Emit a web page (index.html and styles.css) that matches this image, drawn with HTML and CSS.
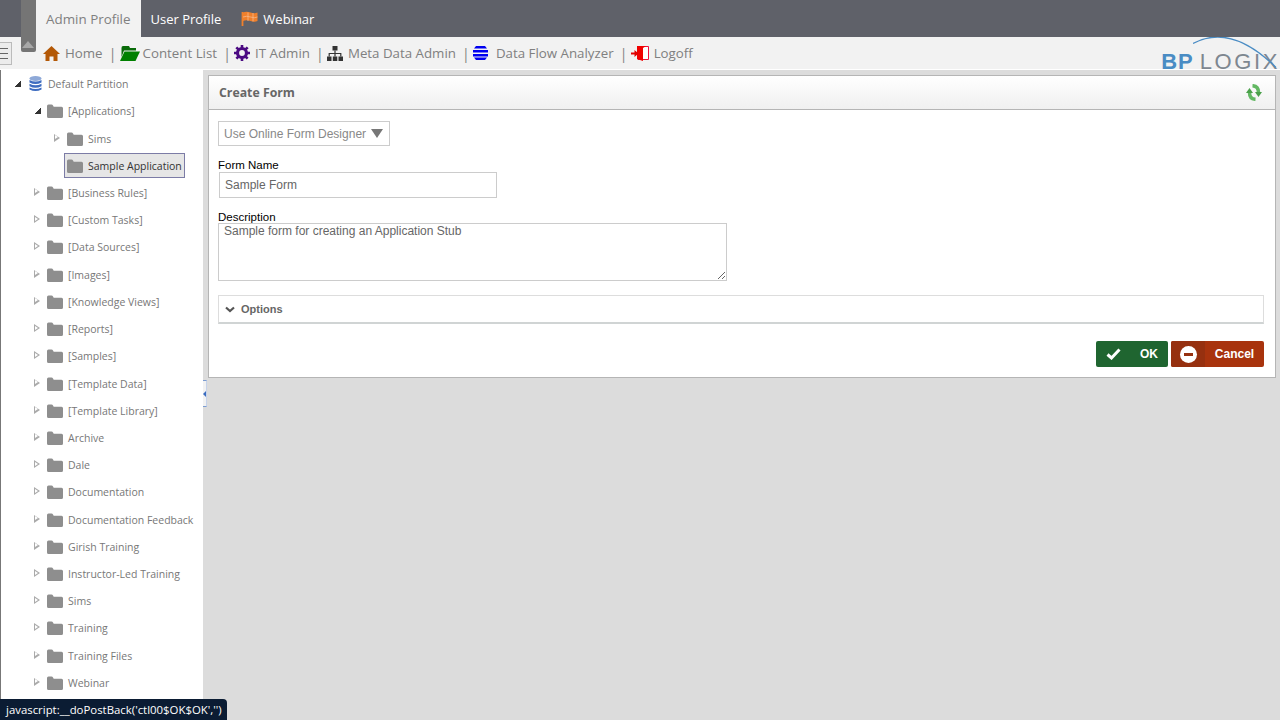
FILE: index.html
```html
<!DOCTYPE html>
<html lang="en">

<head>
    <meta charset="UTF-8">
    <title>Create Form</title>
    <link rel="stylesheet" href="styles.css">
</head>

<body>
    <svg class="defs" width="0" height="0">
        <symbol id="folder" viewBox="0 0 16 14">
            <path d="M0 2q0-1.500 1.500-1.500h3q1 0 1.500 1l.7 1.200h7.800q1.500 0 1.500 1.500v8.300q0 1.500-1.500 1.500h-13q-1.500 0-1.500-1.500z" />
        </symbol>
    </svg>

    <div class="top-bar">
        <a class="tab active">Admin Profile</a>
        <a class="tab">User Profile</a>
        <a class="tab">
            <svg class="flag" viewBox="0 0 17 15" width="17" height="15">
                <path d="M1.500 1v14" stroke="#f0802c" stroke-width="1.800" />
                <path d="M2 1.500q3.500-1.500 7.500 0t7 0v8.500q-3 1.500-7 0t-7.500 0z" fill="#f0802c" />
                <path d="M7 1.500v8.500M12 2v8.500M2 6q3.500-1.500 7.500 0t7 0" stroke="#f8b98a" stroke-width=".8" fill="none" />
            </svg>
            Webinar
        </a>
    </div>
    <div class="handle"><span class="handle-arrow"></span></div>

    <div class="nav-bar">
        <div class="burger"><span></span><span></span><span></span></div>
        <a class="nav-item">
            <svg viewBox="0 0 17 15" width="17" height="15">
                <path d="M8.500 0L17 8h-2.500v7h-4v-4.500h-4V15h-4V8H0z" fill="#b35806" />
            </svg>
            Home
        </a>
        <i class="sep">|</i>
        <a class="nav-item tight">
            <svg viewBox="0 0 20 15" width="20" height="15">
                <path d="M3 0h6l1 2h6v2.500H4L1.500 11V2q0-2 1.500-2z" fill="#0a6b0a" />
                <path d="M4.500 5.500H20L15.500 15H0z" fill="#008000" />
            </svg>
            Content List
        </a>
        <i class="sep">|</i>
        <a class="nav-item">
            <svg viewBox="0 0 16 16" width="16" height="16">
                <circle cx="8" cy="8" r="4.500" fill="none" stroke="#4b0a82" stroke-width="3.200" />
                <path d="M8 0v16M0 8h16M2.300 2.300l11.400 11.400M13.700 2.300L2.300 13.700" stroke="#4b0a82" stroke-width="2.600" stroke-dasharray="3 10 3" />
            </svg>
            IT Admin
        </a>
        <i class="sep">|</i>
        <a class="nav-item">
            <svg viewBox="0 0 16 15" width="16" height="15">
                <path d="M5.500 0h5v4.500h-5zM0 10.500h4.500V15H0zM5.800 10.500h4.500V15H5.800zM11.500 10.500H16V15h-4.500z" fill="#333" />
                <path d="M8 4.500v6M2.200 10.500V7.500h11.600v3" fill="none" stroke="#333" stroke-width="1.200" />
            </svg>
            Meta Data Admin
        </a>
        <i class="sep">|</i>
        <a class="nav-item wide">
            <svg viewBox="0 0 15 14" width="15" height="14">
                <path d="M3 0h9l2 2.500H1zM0 4h15v2.500H0zM0 8h15v2.500H0zM1 11.500h13L12 14H3z" fill="#0000f0" />
            </svg>
            Data Flow Analyzer
        </a>
        <i class="sep">|</i>
        <a class="nav-item">
            <svg viewBox="0 0 18 15" width="18" height="15">
                <path d="M7 .5h10.500v13H7z" fill="#fff" stroke="#f0103c" />
                <path d="M6 0h9l-3 2v13l-6-2z" fill="#f00000" />
                <path d="M0 6.500h3.500V4L7.500 7.500 3.500 11V8.500H0z" fill="#e00000" />
            </svg>
            Logoff
        </a>
        <svg class="logo-arc" viewBox="0 0 87 32" width="87" height="32">
            <path d="M0 6.500Q38-14 83 30.500" fill="none" stroke="#4a8cc4" stroke-width="1.300" />
        </svg>
        <div class="logo"><b>BP</b><span>LOGIX</span></div>
    </div>

    <div class="main">
        <div class="tree">
            <div class="node">
                <i class="arrow open"></i>
                <svg class="db" viewBox="0 0 13 16" width="13" height="16">
                    <ellipse cx="6.500" cy="2.500" rx="6" ry="2.500" fill="#8ea9d8" />
                    <path d="M.5 4q6 3 12 0v2.500q-6 3-12 0zM.5 7.800q6 3 12 0v2.500q-6 3-12 0zM.5 11.500q6 3 12 0v2q-6 3-12 0z" fill="#3d6cc0" />
                </svg>
                <span>Default Partition</span>
            </div>
            <div class="node lvl1"><i class="arrow open"></i><svg class="fld"><use href="#folder" /></svg><span>[Applications]</span></div>
            <div class="node lvl2"><i class="arrow"></i><svg class="fld"><use href="#folder" /></svg><span>Sims</span></div>
            <div class="node lvl2"><i class="arrow none"></i><div class="selected"><svg class="fld"><use href="#folder" /></svg><span>Sample Application</span></div></div>
            <div class="node lvl1"><i class="arrow"></i><svg class="fld"><use href="#folder" /></svg><span>[Business Rules]</span></div>
            <div class="node lvl1"><i class="arrow"></i><svg class="fld"><use href="#folder" /></svg><span>[Custom Tasks]</span></div>
            <div class="node lvl1"><i class="arrow"></i><svg class="fld"><use href="#folder" /></svg><span>[Data Sources]</span></div>
            <div class="node lvl1"><i class="arrow"></i><svg class="fld"><use href="#folder" /></svg><span>[Images]</span></div>
            <div class="node lvl1"><i class="arrow"></i><svg class="fld"><use href="#folder" /></svg><span>[Knowledge Views]</span></div>
            <div class="node lvl1"><i class="arrow"></i><svg class="fld"><use href="#folder" /></svg><span>[Reports]</span></div>
            <div class="node lvl1"><i class="arrow"></i><svg class="fld"><use href="#folder" /></svg><span>[Samples]</span></div>
            <div class="node lvl1"><i class="arrow"></i><svg class="fld"><use href="#folder" /></svg><span>[Template Data]</span></div>
            <div class="node lvl1"><i class="arrow"></i><svg class="fld"><use href="#folder" /></svg><span>[Template Library]</span></div>
            <div class="node lvl1"><i class="arrow"></i><svg class="fld"><use href="#folder" /></svg><span>Archive</span></div>
            <div class="node lvl1"><i class="arrow"></i><svg class="fld"><use href="#folder" /></svg><span>Dale</span></div>
            <div class="node lvl1"><i class="arrow"></i><svg class="fld"><use href="#folder" /></svg><span>Documentation</span></div>
            <div class="node lvl1"><i class="arrow"></i><svg class="fld"><use href="#folder" /></svg><span>Documentation Feedback</span></div>
            <div class="node lvl1"><i class="arrow"></i><svg class="fld"><use href="#folder" /></svg><span>Girish Training</span></div>
            <div class="node lvl1"><i class="arrow"></i><svg class="fld"><use href="#folder" /></svg><span>Instructor-Led Training</span></div>
            <div class="node lvl1"><i class="arrow"></i><svg class="fld"><use href="#folder" /></svg><span>Sims</span></div>
            <div class="node lvl1"><i class="arrow"></i><svg class="fld"><use href="#folder" /></svg><span>Training</span></div>
            <div class="node lvl1"><i class="arrow"></i><svg class="fld"><use href="#folder" /></svg><span>Training Files</span></div>
            <div class="node lvl1"><i class="arrow"></i><svg class="fld"><use href="#folder" /></svg><span>Webinar</span></div>
        </div>

        <div class="content">
            <div class="splitter"><i></i></div>
            <div class="panel">
                <div class="panel-head">
                    <span>Create Form</span>
                    <svg viewBox="0 0 16 17" width="16" height="17">
                        <path d="M9.500 15.300Q3.500 15 3.500 8.500" fill="none" stroke="#62b862" stroke-width="3.500" />
                        <path d="M0 9l3.500-5L7 9z" fill="#4aa04a" />
                        <path d="M6.500 1.700Q12.500 2 12.500 8.500" fill="none" stroke="#62b862" stroke-width="3.500" />
                        <path d="M9 8l3.500 5L16 8z" fill="#4aa04a" />
                    </svg>
                </div>
                <div class="panel-body">
                    <div class="dropdown">Use Online Form Designer<i></i></div>
                    <label class="lbl">Form Name</label>
                    <input class="name-input" type="text" value="Sample Form">
                    <label class="lbl desc-lbl">Description</label>
                    <textarea class="desc">Sample form for creating an Application Stub</textarea>
                    <div class="options">
                        <svg viewBox="0 0 10 7" width="10" height="7">
                            <path d="M1 1.500l4 3.500 4-3.500" fill="none" stroke="#555" stroke-width="2.200" />
                        </svg>
                        Options
                    </div>
                    <div class="buttons">
                        <a class="btn ok">
                            <span class="btn-icon">
                                <svg viewBox="0 0 15 12" width="15" height="12">
                                    <path d="M1.500 6.500l4 3.500 8-8.500" fill="none" stroke="#fff" stroke-width="3" />
                                </svg>
                            </span>
                            <span class="btn-text">OK</span>
                        </a>
                        <a class="btn cancel">
                            <span class="btn-icon"><i class="minus"></i></span>
                            <span class="btn-text">Cancel</span>
                        </a>
                    </div>
                </div>
            </div>
        </div>
    </div>

    <div class="status-tip">javascript:__doPostBack('ctl00$OK$OK','')</div>
</body>

</html>
```

FILE: styles.css
```css
html,
body {
    margin: 0;
    height: 720px;
    overflow: hidden;
}

body {
    position: relative;
    font-family: "Open Sans", sans-serif;
    background: #dcdcdc;
}

.defs {
    position: absolute;
}

/* top tabs */
.top-bar {
    display: flex;
    height: 37px;
    padding-left: 35px;
    background: #5f6169;
}

.tab {
    display: flex;
    align-items: center;
    gap: 5px;
    padding: 0 10px;
    font-size: 13px;
    color: #fff;
}

.tab.active {
    background: #f2f2f2;
    color: #808080;
    padding: 0 10px 0 11px;
    font-size: 13.400px;
}

.handle {
    position: absolute;
    z-index: 2;
    left: 21px;
    top: 0;
    width: 15px;
    height: 52px;
    background: #757575;
    border-radius: 0 0 2px 2px;
}

.handle-arrow {
    position: absolute;
    left: 1px;
    bottom: 4px;
    border: 6.500px solid transparent;
    border-top: 0;
    border-bottom: 7px solid #a8a8a8;
}

/* second row */
.nav-bar {
    position: relative;
    display: flex;
    align-items: center;
    height: 32px;
    background: #f2f2f2;
    border-bottom: 1px solid #fff;
    font-size: 13.300px;
    color: #808080;
}

.burger {
    display: flex;
    flex-direction: column;
    justify-content: center;
    gap: 4px;
    box-sizing: border-box;
    width: 12px;
    height: 23px;
    margin-right: 31px;
    border: 1px solid #bbb;
    border-left: 0;
    background: #ececec;
}

.burger span {
    width: 8px;
    height: 1px;
    background: #666;
}

.nav-item {
    display: flex;
    align-items: center;
    gap: 5px;
}

.nav-item.tight {
    gap: 3px;
}

.nav-item.wide {
    gap: 8px;
}

.sep {
    display: flex;
    justify-content: center;
    width: 2px;
    margin: 0 6px 0 9px;
    font-style: normal;
    font-size: 14px;
}

.logo {
    display: flex;
    align-items: baseline;
    gap: 6px;
    margin: 18px 0 0 auto;
    font-size: 22px;
    line-height: 20px;
    font-family: "Liberation Sans", sans-serif;
    color: #7e8790;
}

.logo b {
    color: #4a8cc4;
    font-size: 22px;
    letter-spacing: 1px;
}

.logo span {
    letter-spacing: 2.600px;
}

.logo-arc {
    position: absolute;
    right: 0;
    top: 0;
}

/* main area */
.main {
    display: flex;
    height: 650px;
}

.tree {
    box-sizing: border-box;
    width: 203px;
    padding-top: .5px;
    background: #fff;
    border-left: 1px solid #777;
    font-size: 10.500px;
    color: #777;
    overflow: hidden;
}

.node {
    display: flex;
    align-items: center;
    height: 27.230px;
    padding-left: 13px;
    white-space: nowrap;
}

.lvl1 {
    padding-left: 33px;
}

.lvl2 {
    padding-left: 53px;
}

.arrow {
    flex: none;
    box-sizing: border-box;
    width: 0;
    height: 0;
    margin: -2px 7px 0 0;
    border-left: 6px solid #aaa;
    border-top: 4.500px solid transparent;
    border-bottom: 4.500px solid transparent;
    position: relative;
}

.arrow::after {
    content: "";
    position: absolute;
    left: -5px;
    top: -2.500px;
    border-left: 3.500px solid #fff;
    border-top: 2.500px solid transparent;
    border-bottom: 2.500px solid transparent;
}

.arrow.open {
    width: 7px;
    height: 7px;
    margin-right: 6px;
    border: 0;
    background: linear-gradient(135deg, transparent 50%, #333 50%);
}

.arrow.open::after,
.arrow.none::after {
    display: none;
}

.arrow.none {
    border-left-color: transparent;
}

.fld {
    flex: none;
    width: 16px;
    height: 14px;
    margin-right: 5px;
    fill: #8e8e8e;
}

.db {
    flex: none;
    margin: 0 6px 0 2px;
}

.selected {
    display: flex;
    align-items: center;
    box-sizing: border-box;
    width: 121px;
    height: 25px;
    margin-left: -3px;
    padding-left: 2px;
    background: #e6e6e6;
    border: 1px solid #7c7ca6;
    color: #333;
}

/* form */
.content {
    position: relative;
    flex: 1;
    padding: 5px 4px 0 5px;
}

.splitter {
    position: absolute;
    left: 0;
    top: 310px;
    width: 4px;
    height: 27px;
    background: #f2f2f2;
    border-top: 1px solid #7c9cd0;
    border-bottom: 1px solid #7c9cd0;
    border-right: 1px solid #c6d3ea;
    box-sizing: border-box;
}

.splitter i {
    position: absolute;
    left: 0;
    top: 10px;
    border-right: 3px solid #3a6cc0;
    border-top: 3px solid transparent;
    border-bottom: 3px solid transparent;
}

.panel {
    background: #fff;
    border: 1px solid #b5b5b5;
}

.panel-head {
    display: flex;
    align-items: center;
    justify-content: space-between;
    box-sizing: border-box;
    height: 34px;
    padding: 0 13px 0 10px;
    background: linear-gradient(#fff, #f0f0f0);
    border-bottom: 1px solid #b5b5b5;
    font-size: 12.300px;
    font-weight: 700;
    color: #666;
}

.panel-body {
    display: flex;
    flex-direction: column;
    align-items: flex-start;
    height: 267px;
    box-sizing: border-box;
    padding: 11px 11px 0 9px;
    font-family: "Liberation Sans", sans-serif;
}

.dropdown {
    display: flex;
    align-items: center;
    justify-content: space-between;
    box-sizing: border-box;
    width: 172px;
    height: 25px;
    padding: 0 6px 0 5px;
    border: 1px solid #ccc;
    font-size: 12px;
    color: #888;
}

.dropdown i {
    border: 6px solid transparent;
    border-top: 9px solid #777;
    border-bottom: 0;
}

.lbl {
    margin-top: 13px;
    height: 13px;
    line-height: 13px;
    font-size: 11.500px;
    color: #000;
}

.desc-lbl {
    height: 12px;
    margin-top: 13px;
}

.name-input {
    box-sizing: border-box;
    width: 278px;
    height: 26px;
    margin: 0 0 0 1px;
    padding: 0 5px;
    border: 1px solid #ccc;
    font-family: "Liberation Sans", sans-serif;
    font-size: 12px;
    color: #666;
}

.desc {
    box-sizing: border-box;
    width: 509px;
    height: 58px;
    margin: 0;
    padding: 0 5px;
    border: 1px solid #ccc;
    font-family: "Liberation Sans", sans-serif;
    font-size: 12px;
    color: #666;
}

.options {
    display: flex;
    align-items: center;
    gap: 6px;
    align-self: stretch;
    box-sizing: border-box;
    height: 29px;
    margin-top: 14px;
    padding-left: 6px;
    border: 1px solid #ddd;
    border-bottom: 2px solid #d0d4d4;
    font-size: 11px;
    font-weight: 700;
    color: #666;
}

.buttons {
    display: flex;
    gap: 3px;
    align-self: flex-end;
    margin-top: 17px;
}

.btn {
    display: flex;
    height: 26px;
    border-radius: 2px;
    overflow: hidden;
    font-size: 12px;
    font-weight: 700;
    color: #fff;
}

.btn-icon,
.btn-text {
    display: flex;
    align-items: center;
    justify-content: center;
}

.ok {
    width: 72px;
    background: #1f6530;
}

.ok .btn-icon {
    width: 34px;
}

.ok .btn-text {
    flex: 1;
}

.cancel {
    width: 93px;
    background: #a8330d;
}

.cancel .btn-icon {
    width: 34px;
    background: #96300f;
}

.cancel .btn-text {
    flex: 1;
}

.minus {
    position: relative;
    width: 17px;
    height: 17px;
    border-radius: 50%;
    background: #fff;
}

.minus::after {
    content: "";
    position: absolute;
    left: 4px;
    top: 7px;
    width: 9px;
    height: 3px;
    background: #96300f;
}

.status-tip {
    position: absolute;
    left: 0;
    top: 699px;
    box-sizing: border-box;
    width: 227px;
    height: 21px;
    padding-left: 6px;
    line-height: 21px;
    background: #0b1c33;
    border-radius: 0 4px 0 0;
    font-size: 11.400px;
    color: #fff;
    white-space: nowrap;
}
```
